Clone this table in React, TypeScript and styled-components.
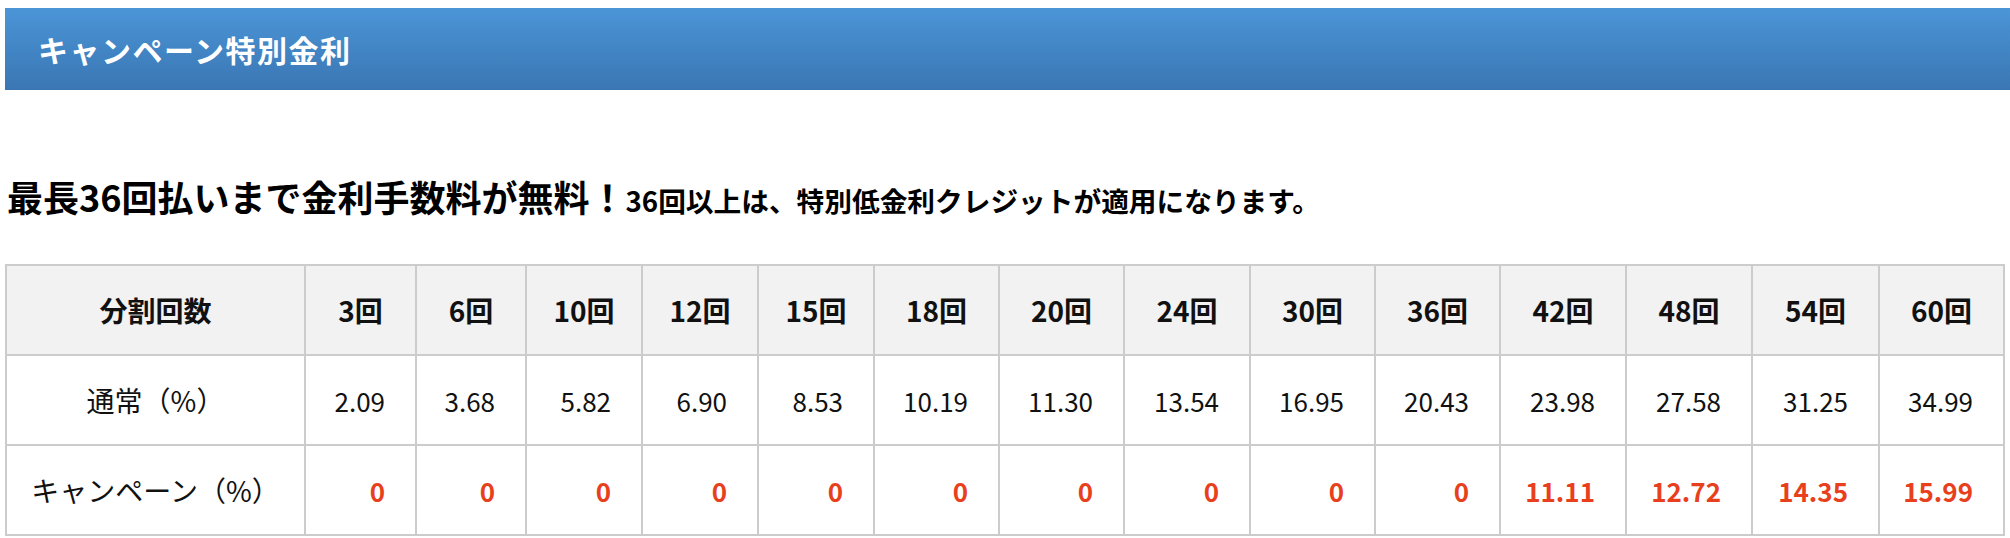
import styled, { createGlobalStyle } from "styled-components";

const GlobalStyle = createGlobalStyle`
  html, body {
    margin: 0;
    padding: 0;
    background: #fff;
  }
  body {
    font-family: "Noto Sans CJK JP", "Noto Sans", sans-serif;
    color: #111;
  }
`;

const terms = [3, 6, 10, 12, 15, 18, 20, 24, 30, 36, 42, 48, 54, 60];
const normalRates = [
  "2.09", "3.68", "5.82", "6.90", "8.53", "10.19", "11.30",
  "13.54", "16.95", "20.43", "23.98", "27.58", "31.25", "34.99",
];
const campaignRates = [
  "0", "0", "0", "0", "0", "0", "0", "0", "0", "0",
  "11.11", "12.72", "14.35", "15.99",
];
// 参照画像から測ったカラム幅
const colWidths = [299, 111, 110, 116, 116, 116, 125, 125, 126, 125, 125, 126, 126, 127, 125];

function App() {
  return (
    <>
      <GlobalStyle />
      <Page>
        <TitleBar>
          <h2>キャンペーン特別金利</h2>
        </TitleBar>

        <Lead>
          最長36回払いまで金利手数料が無料！
          <small>36回以上は、特別低金利クレジットが適用になります。</small>
        </Lead>

        <RateTable>
          <colgroup>
            {colWidths.map((w, i) => (
              <col key={i} style={{ width: w }} />
            ))}
          </colgroup>
          <thead>
            <tr>
              <HeadCell>分割回数</HeadCell>
              {terms.map((t) => (
                <HeadCell key={t}>{t}回</HeadCell>
              ))}
            </tr>
          </thead>
          <tbody>
            <tr>
              <LabelCell>通常（%）</LabelCell>
              {normalRates.map((r, i) => (
                <ValueCell key={i}>{r}</ValueCell>
              ))}
            </tr>
            <tr>
              <LabelCell>キャンペーン（%）</LabelCell>
              {campaignRates.map((r, i) => (
                <ValueCell key={i} $campaign>
                  {r}
                </ValueCell>
              ))}
            </tr>
          </tbody>
        </RateTable>
      </Page>
    </>
  );
}

const Page = styled.div`
  padding: 8px 0 0 5px;
`;

const TitleBar = styled.div`
  height: 82px;
  display: flex;
  align-items: center;
  padding-left: 33px;
  background: linear-gradient(to bottom, #4b95d7 0%, #3a76b3 100%);

  h2 {
    margin: 0;
    color: #fff;
    font-size: 30px;
    font-weight: 700;
    letter-spacing: 1.5px;
  }
`;

const Lead = styled.p`
  margin: 80px 0 37px 2px;
  font-size: 36px;
  line-height: 53px;
  font-weight: 700;
  color: #000;

  small {
    font-size: 27.7px;
  }
`;

const RateTable = styled.table`
  border-collapse: collapse;
  table-layout: fixed;
  width: 1998px;

  td,
  th {
    border: 2px solid #cccccc;
    height: 88px;
    padding: 0;
    font-size: 26px;
  }
`;

const HeadCell = styled.th`
  background: #f2f2f2;
  font-weight: 700;
  text-align: center;
  color: #111;
  font-size: 28px !important;
`;

const LabelCell = styled.td`
  text-align: center;
  font-weight: 400;
  font-size: 28px !important;
`;

interface ValueCellProps {
  $campaign?: boolean;
}

const ValueCell = styled.td<ValueCellProps>`
  text-align: right;
  padding-right: 30px !important;
  font-weight: ${(props) => (props.$campaign ? 700 : 400)};
  color: ${(props) => (props.$campaign ? "#e8401c" : "#111")};
`;

export default App;
